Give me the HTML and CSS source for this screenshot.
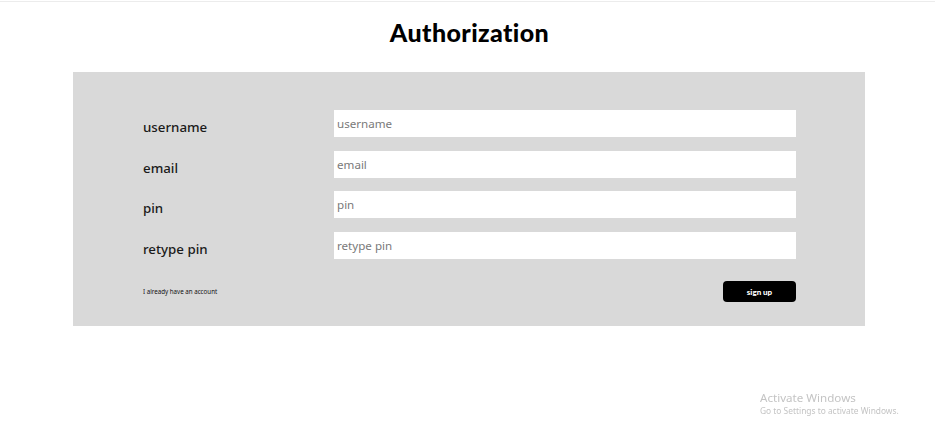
FILE: index.html
```html
<!DOCTYPE html>
<html lang="en">
<head>
<meta charset="utf-8">
<title>Authorization</title>
<link rel="stylesheet" href="styles.css">
</head>
<body>
<div class="page">
  <h1 class="title">Authorization</h1>
  <form class="panel">
    <div class="fields">
      <label class="label" for="username">username</label>
      <input class="field" id="username" type="text" placeholder="username">
      <label class="label" for="email">email</label>
      <input class="field" id="email" type="email" placeholder="email">
      <label class="label" for="pin">pin</label>
      <input class="field" id="pin" type="password" placeholder="pin">
      <label class="label" for="repin">retype pin</label>
      <input class="field" id="repin" type="password" placeholder="retype pin">
    </div>
    <div class="actions">
      <a class="login-link" href="#">I already have an account</a>
      <button class="submit" type="button">sign up</button>
    </div>
  </form>
</div>
<div class="watermark">
  <div class="wm-title">Activate Windows</div>
  <div class="wm-sub">Go to Settings to activate Windows.</div>
</div>
</body>
</html>
```
FILE: styles.css
```css
html, body {
  margin: 0;
  padding: 0;
  background: #ffffff;
}

body {
  padding-top: 1px;
  font-family: "Noto Sans", "Open Sans", sans-serif;
  color: #111;
}

.page {
  border-top: 1px solid #ececec;
}

.title {
  margin: 0;
  padding: 15px 0 0 4px;
  height: 54px;
  box-sizing: border-box;
  text-align: center;
  font-family: "Lato", "DejaVu Sans", sans-serif;
  font-weight: 900;
  font-size: 25px;
  letter-spacing: 0.4px;
  line-height: 30px;
  color: #000;
}

.panel {
  margin: 16px 70px 0 73px;
  background: #d9d9d9;
  padding: 38px 69px 24px 70px;
}

.fields {
  display: grid;
  grid-template-columns: 191px 1fr;
  row-gap: 13.7px;
}

.label {
  display: block;
  height: 27px;
  line-height: 27px;
  padding-top: 4px;
  box-sizing: border-box;
  font-size: 13.3px;
  font-weight: 500;
  color: #1a1a1a;
}

.field {
  height: 27px;
  box-sizing: border-box;
  border: none;
  outline: none;
  background: #fff;
  padding: 0 3px;
  font-family: "Noto Sans", "Open Sans", sans-serif;
  font-size: 11.6px;
  color: #333;
}

.field::placeholder {
  color: #7a7a7a;
}

.actions {
  margin-top: 22px;
  display: flex;
  justify-content: space-between;
  align-items: center;
}

.login-link {
  font-size: 6.2px;
  color: #111;
  text-decoration: none;
}

.submit {
  width: 73px;
  height: 21px;
  border: none;
  border-radius: 4px;
  background: #000;
  color: #fff;
  font-family: "Lato", "DejaVu Sans", sans-serif;
  font-weight: 900;
  font-size: 8px;
  padding: 0;
}

.watermark {
  position: fixed;
  left: 760px;
  top: 390px;
  font-family: "Noto Sans", "Open Sans", sans-serif;
  color: #c4c4c4;
}

.wm-title {
  font-size: 11.6px;
  line-height: 15px;
}

.wm-sub {
  font-size: 8.4px;
  line-height: 12px;
}
```
